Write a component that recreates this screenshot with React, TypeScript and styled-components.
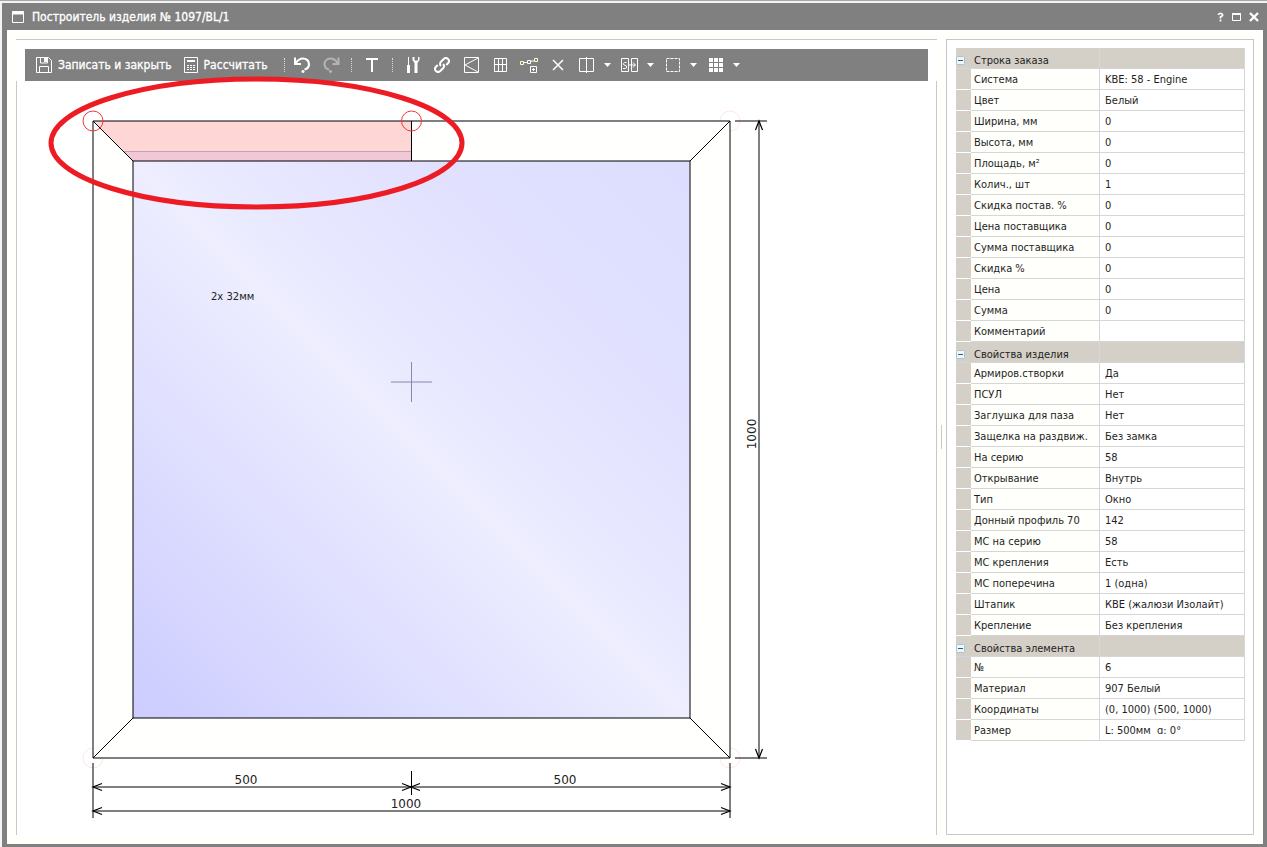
import React from "react";
import styled, { createGlobalStyle } from "styled-components";

const GlobalStyle = createGlobalStyle`
  * { box-sizing: border-box; }
  body {
    margin: 0;
    background: #e4e4e4;
    color: #1e1e1e;
    font: 11px/16px "DejaVu Sans Condensed", Tahoma, sans-serif;
  }
`;

const Window = styled.div`
  display: flex;
  flex-direction: column;
  min-height: 100vh;
  border-top: 1px solid #a8a8a8;
  padding: 2px 0 0 2px;
  background: #f4f4f4;
`;

const TitleBar = styled.header`
  display: flex;
  align-items: center;
  gap: 8px;
  height: 27px;
  padding: 0 8px 0 10px;
  background: #808080;
  color: #fff;
`;

const Title = styled.h1`
  flex: 1;
  margin: 0;
  font-size: 12px;
  font-weight: 400;
  -webkit-text-stroke: 0.3px #fff;
`;

const WindowButton = styled.button`
  display: flex;
  padding: 0;
  border: 0;
  background: none;
  color: #fff;
`;

const WindowButtons = styled.div`
  display: flex;
  gap: 5px;
`;

const Body = styled.main`
  flex: 1;
  display: flex;
  padding: 9px;
  border: solid #808080;
  border-width: 0 4px 3px 5px;
  background: #fffffb;
`;

const Editor = styled.section`
  flex: 1;
  min-width: 0;
  display: flex;
  flex-direction: column;
  border-top: 1px solid #c8c8c8;
  background: #fff;
`;

const Toolbar = styled.div`
  display: flex;
  align-items: center;
  height: 32px;
  margin: 9px 9px 0;
  padding: 0 10px;
  background: #808080;
  color: #fff;
`;

const ToolButton = styled.button<{ $gap?: number }>`
  display: flex;
  align-items: center;
  gap: 5px;
  height: 24px;
  margin: 0 ${(p) => p.$gap ?? 9}px 0 0;
  padding: 0;
  border: 0;
  background: none;
  color: #fff;
  font: 12px/16px "DejaVu Sans Condensed", Tahoma, sans-serif;
  -webkit-text-stroke: 0.3px #fff;
  white-space: nowrap;
  &:disabled { color: #b4b4b4; }
`;

const Divider = styled.span<{ $gap?: number }>`
  height: 14px;
  margin-right: ${(p) => p.$gap ?? 9}px;
  border-left: 1px dotted #d8d8d8;
`;

const Canvas = styled.div`
  position: relative;
  flex: 1;
  display: flex;
  border: solid #c8c8c8;
  border-width: 0 1px;
`;

const Drawing = styled.svg`
  flex: 1;
  min-width: 0;
  overflow: visible;
  font: 12px "DejaVu Sans", Verdana, sans-serif;
`;

const Splitter = styled.div`
  display: flex;
  align-items: center;
  justify-content: center;
  width: 9px;
  &::before {
    content: "";
    height: 24px;
    border-left: 1px solid #c8c8c8;
  }
`;

const Properties = styled.aside`
  width: 308px;
  padding: 8px 8px 8px 9px;
  border: 1px solid #c8c8cc;
  background: #fff;
`;

const PropTable = styled.table`
  width: 100%;
  border-spacing: 0;
  table-layout: fixed;
`;

const IndentCol = styled.col`
  width: 15px;
`;

const LabelCol = styled.col`
  width: 129px;
`;

const Row = styled.tr`
  height: 21px;
`;

const Indent = styled.td`
  padding: 0;
  border-bottom: 1px solid #fff;
  background: #d4cfc7;
`;

const Label = styled.th`
  padding: 2px 3px 0;
  border: solid #d6d6d6;
  border-width: 0 1px 1px 0;
  background: #fffffb;
  font-weight: 400;
  text-align: left;
  white-space: nowrap;
`;

const Value = styled.td`
  padding: 2px 5px 0;
  border: solid #d6d6d6;
  border-width: 0 1px 1px 0;
  white-space: nowrap;
`;

const GroupIndent = styled(Indent)`
  padding-top: 5px;
  border-color: #d6d6d6;
`;

const GroupLabel = styled(Label)`
  padding-top: 6px;
  background: #d4cfc7;
  line-height: 14px;
`;

const GroupValue = styled(Value)`
  background: #d4cfc7;
`;

const Toggle = styled.button`
  display: block;
  padding: 0;
  border: 0;
  background: none;
  line-height: 0;
`;

type Group = { name: string; rows: [string, string][] };

const groups: Group[] = [
  {
    name: "Строка заказа",
    rows: [
      ["Система", "KBE: 58 - Engine"],
      ["Цвет", "Белый"],
      ["Ширина, мм", "0"],
      ["Высота, мм", "0"],
      ["Площадь, м²", "0"],
      ["Колич., шт", "1"],
      ["Скидка постав. %", "0"],
      ["Цена поставщика", "0"],
      ["Сумма поставщика", "0"],
      ["Скидка %", "0"],
      ["Цена", "0"],
      ["Сумма", "0"],
      ["Комментарий", ""],
    ],
  },
  {
    name: "Свойства изделия",
    rows: [
      ["Армиров.створки", "Да"],
      ["ПСУЛ", "Нет"],
      ["Заглушка для паза", "Нет"],
      ["Защелка на раздвиж.", "Без замка"],
      ["На серию", "58"],
      ["Открывание", "Внутрь"],
      ["Тип", "Окно"],
      ["Донный профиль 70", "142"],
      ["МС на серию", "58"],
      ["МС крепления", "Есть"],
      ["МС поперечина", "1 (одна)"],
      ["Штапик", "КВЕ (жалюзи Изолайт)"],
      ["Крепление", "Без крепления"],
    ],
  },
  {
    name: "Свойства элемента",
    rows: [
      ["№", "6"],
      ["Материал", "907 Белый"],
      ["Координаты", "(0, 1000) (500, 1000)"],
      ["Размер", "L: 500мм \u00a0ɑ: 0°"],
    ],
  },
];

type IconProps = { w?: number; h?: number; children: React.ReactNode };

const Icon = ({ w = 16, h = 16, children }: IconProps) => (
  <svg width={w} height={h} viewBox={`0 0 ${w} ${h}`} fill="none" stroke="currentColor" aria-hidden="true">
    {children}
  </svg>
);

const Caret = () => (
  <Icon w={7} h={4}>
    <path d="M0 0h7L3.5 4z" fill="currentColor" stroke="none" />
  </Icon>
);

const gridCells = [0, 5, 10];

const Arrow = ({ x, y, turn }: { x: number; y: number; turn: number }) => (
  <path d="M9 -3.5L0 0L9 3.5" transform={`translate(${x} ${y}) rotate(${turn})`} fill="none" stroke="#000" strokeWidth="1.2" />
);

const FrameDrawing = () => (
  <Drawing role="img" aria-label="Чертёж изделия">
    <defs>
      <linearGradient id="glass" x1="0" y1="1" x2="1" y2="0">
        <stop offset="0" stopColor="#ccccff" />
        <stop offset="0.3" stopColor="#e0e0ff" />
        <stop offset="0.43" stopColor="#e8e8ff" />
        <stop offset="0.5" stopColor="#eeeeff" />
        <stop offset="0.58" stopColor="#e8e8ff" />
        <stop offset="0.8" stopColor="#e0e0ff" />
        <stop offset="1" stopColor="#ddddff" />
      </linearGradient>
    </defs>
    <g transform="translate(76 40)">
      <g fill="none" stroke="#ff0000" strokeOpacity="0.1">
        <circle cx="637" cy="0" r="10" />
        <circle cx="0" cy="637" r="10" />
        <circle cx="637" cy="637" r="10" />
      </g>
      <path d="M0 0H637V637H0Z" fill="#fffffd" />
      <path d="M0 0H318V40H40Z" fill="#ffd6d6" />
      <path d="M31 31H318V40H40Z" fill="#f0c8d6" />
      <path d="M31 30.5H318" stroke="#c8a0b4" />
      <path d="M0 0H637V637H0Z" fill="none" stroke="#000" />
      <rect x="40" y="40" width="557" height="557" fill="url(#glass)" stroke="#000" />
      <path d="M0 0L40 40M637 0L597 40M0 637L40 597M637 637L597 597" stroke="#000" />
      <path d="M318.5 0V40" stroke="#000" />
      <path d="M318.5 241V281" stroke="#8a86b0" />
      <path d="M298 261H339" stroke="#8a86b0" />
      <text x="118" y="179" fontSize="10" fill="#222">2x 32мм</text>

      <g stroke="#000" fill="none">
        <path d="M642 0H674M642 637H674M666 0V637" />
        <path d="M0 642V697M637 642V697M318.5 650V674" />
        <path d="M0 666H637M0 690H637" />
      </g>
      <Arrow x={666} y={0} turn={90} />
      <Arrow x={666} y={637} turn={-90} />
      <Arrow x={0} y={666} turn={0} />
      <Arrow x={318} y={666} turn={180} />
      <Arrow x={318} y={666} turn={0} />
      <Arrow x={637} y={666} turn={180} />
      <Arrow x={0} y={690} turn={0} />
      <Arrow x={637} y={690} turn={180} />
      <g fill="#222" textAnchor="middle">
        <text x="153" y="663">500</text>
        <text x="472" y="663">500</text>
        <text x="313" y="687">1000</text>
        <text transform="translate(663 313) rotate(-90)">1000</text>
      </g>

      <g fill="none" stroke="#ee3a3a">
        <circle cx="0" cy="0" r="10" />
        <circle cx="318.5" cy="0" r="10" />
      </g>
      <ellipse cx="163.500" cy="22" rx="205.500" ry="64" fill="none" stroke="#ed1c24" strokeWidth="5" />
    </g>
  </Drawing>
);

const EditorToolbar = () => (
  <Toolbar role="toolbar">
    <ToolButton $gap={12}>
      <Icon w={18} h={18}>
        <path d="M1.5 1.5h12l3 3v12h-15zM5.500 2v5h7V2M4.500 16.500v-6h9v6" />
        <path d="M9 2h3v4H9z" fill="currentColor" stroke="none" />
      </Icon>
      Записать и закрыть
    </ToolButton>
    <ToolButton $gap={16}>
      <Icon w={15} h={16}>
        <path d="M.5 .5h13v15H.5z" />
        <path d="M3 4h8" strokeWidth="2" />
        <path d="M3 8.500h2M6 8.500h2M9 8.500h2M3 10.500h2M6 10.500h2M9 10.500h2M3 12.500h2M6 12.500h2M9 12.500h2" />
      </Icon>
      Рассчитать
    </ToolButton>
    <Divider />
    <ToolButton $gap={12} aria-label="Отменить">
      <Icon w={17} h={16}>
        <path d="M1 .5v6.500h6" strokeWidth="2" />
        <path d="M1.500 6.500C4 2.500 6 1.500 9 1.500C12.500 1.500 15 4 15 7C15 10 13 12 10.500 12.500" strokeWidth="2.200" />
        <path d="M7.500 14.500h3M9 13v3" strokeWidth="1.500" />
      </Icon>
    </ToolButton>
    <ToolButton disabled $gap={11} aria-label="Повторить">
      <Icon w={17} h={16}>
        <path d="M15.500 .5v6.500h-6" strokeWidth="2" />
        <path d="M15 6.500C12.500 2.500 10.500 1.500 7.500 1.500C4 1.500 1.500 4 1.500 7C1.500 10 3.500 12 6 12.500" strokeWidth="2" />
        <path d="M6 14.500h3M7.500 13v3" strokeWidth="1.500" />
      </Icon>
    </ToolButton>
    <Divider $gap={14} />
    <ToolButton $gap={14} aria-label="Текст">
      <Icon w={12} h={16}>
        <path d="M0 2h12M6 2v13" strokeWidth="2" />
      </Icon>
    </ToolButton>
    <Divider $gap={13} />
    <ToolButton $gap={14} aria-label="Инструменты">
      <Icon w={14} h={16}>
        <path d="M2.500 0v8" />
        <path d="M2.500 8v8" strokeWidth="3" />
        <path d="M6.500 0v3l2 3V16h3V6l2-3V0h-1.500v3.500h-3.500V0z" fill="currentColor" stroke="none" />
      </Icon>
    </ToolButton>
    <ToolButton $gap={14} aria-label="Связь">
      <Icon>
        <g transform="rotate(-45 8 8)" strokeWidth="2">
          <path d="M9.500 8A3 3 0 0 1 6.500 11H2.500a3 3 0 0 1 0-6H5" />
          <path d="M6.500 8A3 3 0 0 1 9.500 5H13.500a3 3 0 0 1 0 6H11" />
        </g>
      </Icon>
    </ToolButton>
    <ToolButton $gap={15} aria-label="Створка">
      <Icon w={15} h={16}>
        <path d="M.5 .5h14v15H.5zM14 1L1 8L14 15" />
      </Icon>
    </ToolButton>
    <ToolButton $gap={13} aria-label="Раскладка">
      <Icon w={13} h={16}>
        <path d="M.5 1.500h12v13H.5zM4.500 1v14M8.500 1v14M0 7.500h13" />
      </Icon>
    </ToolButton>
    <ToolButton $gap={14} aria-label="Добавить узел">
      <Icon w={18} h={16}>
        <path d="M.5 4.500h3v3h-3zM14.500 1.500h3v3h-3z" stroke="#ffffc0" />
        <path d="M7.500 3.500h3v3h-3zM4 5.500h3.500M11 4h3.500M10.500 9.500h6v6h-6zM13.500 11v3M12 12.500h3" />
      </Icon>
    </ToolButton>
    <ToolButton $gap={15} aria-label="Удалить">
      <Icon w={12} h={12}>
        <path d="M1 1L11 11M11 1L1 11" strokeWidth="1.500" />
      </Icon>
    </ToolButton>
    <ToolButton $gap={9} aria-label="Импост">
      <Icon w={16} h={16}>
        <path d="M.5 1.500h14v13H.5zM7.500 0v16" />
      </Icon>
    </ToolButton>
    <ToolButton $gap={10} aria-label="Варианты импоста"><Caret /></ToolButton>
    <ToolButton $gap={9} aria-label="Система">
      <Icon w={17} h={16}>
        <path d="M.5 1.500h7v13h-7zM10.500 1.500h6v13h-6z" />
        <path d="M5.500 5.500H3.500l-1 1v1l3 1.500v2l-1 .5H2M7 8h7M12 5.500L14.500 8L12 10.500" />
      </Icon>
    </ToolButton>
    <ToolButton $gap={12} aria-label="Варианты системы"><Caret /></ToolButton>
    <ToolButton $gap={10} aria-label="Выделение">
      <Icon w={14} h={16}>
        <path d="M.5 1.500h13v13H.5z" strokeDasharray="3 1" />
      </Icon>
    </ToolButton>
    <ToolButton $gap={12} aria-label="Варианты выделения"><Caret /></ToolButton>
    <ToolButton $gap={10} aria-label="Сетка">
      <Icon w={14} h={14}>
        {gridCells.map((x) =>
          gridCells.map((y) => (
            <rect key={`${x}-${y}`} x={x} y={y} width="4" height="4" fill="currentColor" stroke="none" />
          )),
        )}
      </Icon>
    </ToolButton>
    <ToolButton $gap={0} aria-label="Варианты сетки"><Caret /></ToolButton>
  </Toolbar>
);

const PropertyTable = () => (
  <PropTable>
    <colgroup>
      <IndentCol />
      <LabelCol />
      <col />
    </colgroup>
    {groups.map((group) => (
      <tbody key={group.name}>
        <Row>
          <GroupIndent>
            <Toggle aria-label={`Свернуть: ${group.name}`}>
              <svg width="9" height="9" viewBox="0 0 9 9" aria-hidden="true">
                <rect x=".5" y=".5" width="8" height="8" rx="1" fill="#eef6fa" stroke="#a9c3d3" />
                <path d="M2 4.500h5" stroke="#2f5f80" />
              </svg>
            </Toggle>
          </GroupIndent>
          <GroupLabel scope="rowgroup">{group.name}</GroupLabel>
          <GroupValue />
        </Row>
        {group.rows.map(([label, value]) => (
          <Row key={label}>
            <Indent />
            <Label scope="row">{label}</Label>
            <Value>{value}</Value>
          </Row>
        ))}
      </tbody>
    ))}
  </PropTable>
);

export default function App() {
  return (
    <>
      <GlobalStyle />
      <Window>
        <TitleBar>
          <Icon w={12} h={12}>
            <path d="M.5 .5h11v11H.5z" />
            <path d="M0 2h12" strokeWidth="3" />
          </Icon>
          <Title>Построитель изделия № 1097/BL/1</Title>
          <WindowButtons>
            <WindowButton aria-label="Справка">
              <Icon w={12} h={10}>
                <path d="M3.500 3V2.500L4.500 1.500h2L7.500 2.500v1L5.500 5v1.500M5.500 7.500v2" strokeWidth="1.700" />
              </Icon>
            </WindowButton>
            <WindowButton aria-label="Развернуть">
              <Icon w={12} h={10}>
                <path d="M.5 1.500h8v7h-8z" />
                <path d="M0 2h9" strokeWidth="2" />
              </Icon>
            </WindowButton>
            <WindowButton aria-label="Закрыть">
              <Icon w={10} h={10}>
                <path d="M1 1L9 9M9 1L1 9" strokeWidth="2.400" />
              </Icon>
            </WindowButton>
          </WindowButtons>
        </TitleBar>
        <Body>
          <Editor>
            <EditorToolbar />
            <Canvas>
              <FrameDrawing />
            </Canvas>
          </Editor>
          <Splitter />
          <Properties>
            <PropertyTable />
          </Properties>
        </Body>
      </Window>
    </>
  );
}
